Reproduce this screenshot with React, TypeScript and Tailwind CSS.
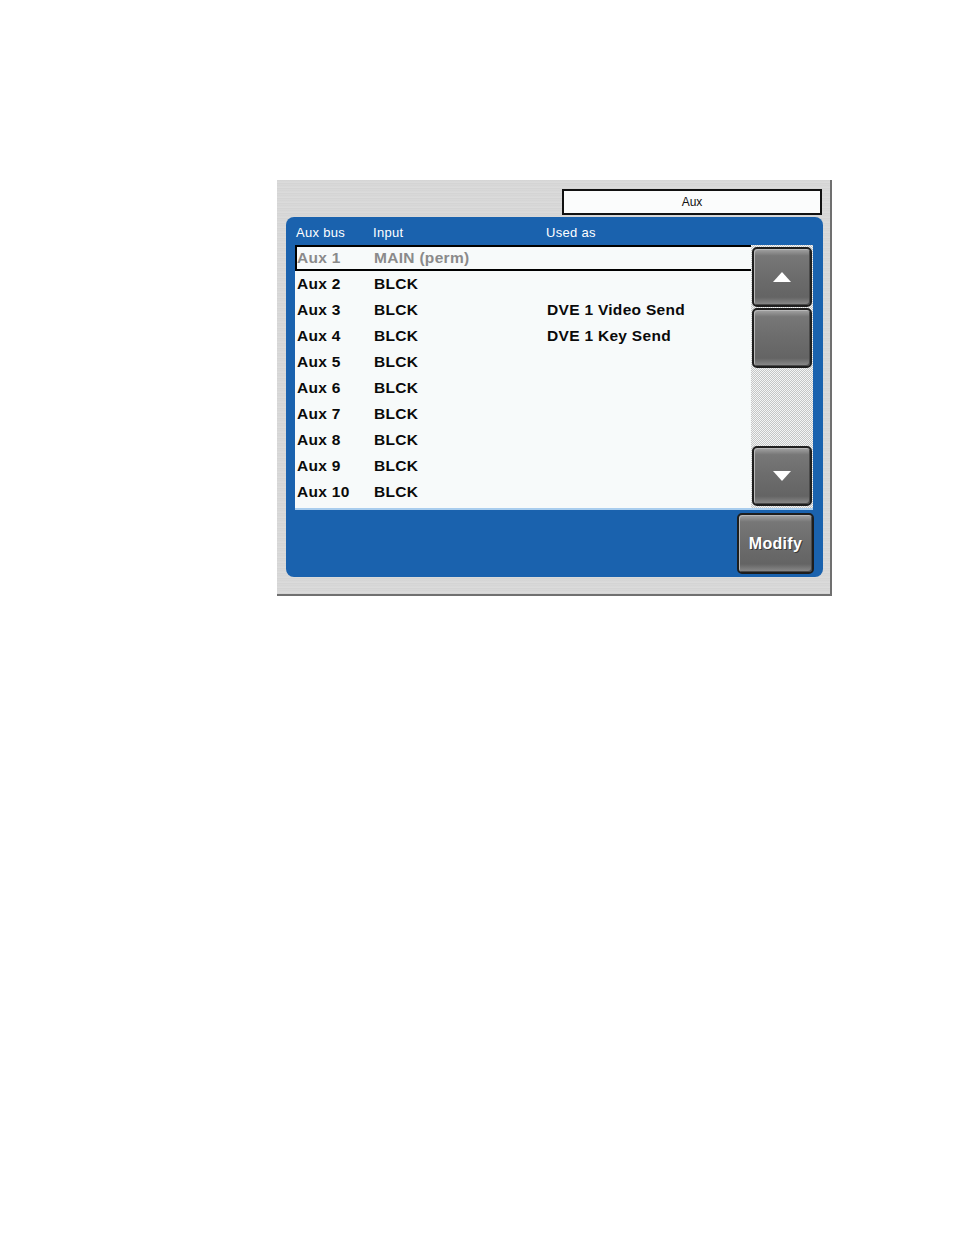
import React from 'react';

const rows = [
  { bus: 'Aux 1', input: 'MAIN (perm)', used: '' },
  { bus: 'Aux 2', input: 'BLCK', used: '' },
  { bus: 'Aux 3', input: 'BLCK', used: 'DVE 1 Video Send' },
  { bus: 'Aux 4', input: 'BLCK', used: 'DVE 1 Key Send' },
  { bus: 'Aux 5', input: 'BLCK', used: '' },
  { bus: 'Aux 6', input: 'BLCK', used: '' },
  { bus: 'Aux 7', input: 'BLCK', used: '' },
  { bus: 'Aux 8', input: 'BLCK', used: '' },
  { bus: 'Aux 9', input: 'BLCK', used: '' },
  { bus: 'Aux 10', input: 'BLCK', used: '' },
];

// grey hardware-style key used for scroll arrows and Modify
function Key({ className = '', children }: { className?: string; children?: React.ReactNode }) {
  return (
    <div
      className={
        'flex items-center justify-center rounded-[5px] border-2 border-[#1e1e1e] bg-[linear-gradient(180deg,#a4a4a4_0%,#777_12%,#6c6c6c_50%,#646464_86%,#8c8c8c_100%)] shadow-[inset_1px_1px_0_#b8b8b8,inset_-1px_-1px_0_#4a4a4a] ' +
        className
      }
    >
      {children}
    </div>
  );
}

export default function App() {
  return (
    <div className="min-h-[1235px] w-full bg-white pl-[277px] pt-[180px] font-['Liberation_Sans',Arial,sans-serif]">
      <div className="flex h-[416px] w-[555px] flex-col border-b-2 border-r-2 border-[#707070] bg-[#d8d8d8] bg-[image:repeating-linear-gradient(180deg,#dedede_0px,#cdcdcd_1px,#e4e4e4_2px,#d2d2d2_3px,#dadada_5px)] pl-[9px] pt-[9px]">
        {/* title box */}
        <div className="flex justify-end pr-[8px]">
          <div className="flex h-[26px] w-[260px] items-center justify-center border-2 border-[#111] bg-[#fbfcfc] text-[12px] text-[#111]">
            Aux
          </div>
        </div>

        {/* blue panel */}
        <div className="mt-[2px] flex h-[360px] w-[537px] flex-col rounded-[8px] bg-[#1a62ae] pl-[9px]">
          <div className="flex h-[28px] items-center pt-[4px] text-[13px] tracking-[0.3px] text-white">
            <div className="w-[78px] pl-[1px]">Aux bus</div>
            <div className="w-[173px]">Input</div>
            <div>Used as</div>
          </div>

          <div className="flex h-[265px] w-[518px] border-b-2 border-[#a9cdee] bg-[#f7fafa]">
            <div className="flex w-[456px] flex-col">
              {rows.map((r, i) => (
                <div
                  key={r.bus}
                  className={
                    'flex h-[26px] items-center text-[15.5px] font-bold tracking-[0.3px] ' +
                    (i === 0
                      ? 'w-[458px] border-2 border-black text-[#8a8a8a]'
                      : 'pl-[2px] text-[#0a0a0a]')
                  }
                >
                  <div className="w-[77px]">{r.bus}</div>
                  <div className="w-[173px]">{r.input}</div>
                  <div>{r.used}</div>
                </div>
              ))}
            </div>
            <div className="flex w-[62px] flex-col bg-[#e6e8e8] bg-[image:repeating-conic-gradient(#c4c6c6_0_25%,#f4f5f5_0_50%)] bg-[length:2px_2px] pl-[1px] pt-[2px]">
              <Key className="h-[60px] w-[60px]">
                <svg width="18" height="10" viewBox="0 0 18 10">
                  <polygon points="9,0 18,10 0,10" fill="#fff" />
                </svg>
              </Key>
              <Key className="mt-[1px] h-[60px] w-[60px]" />
              <div className="flex-1" />
              <Key className="mb-[2px] h-[60px] w-[60px]">
                <svg width="18" height="10" viewBox="0 0 18 10">
                  <polygon points="0,0 18,0 9,10" fill="#fff" />
                </svg>
              </Key>
            </div>
          </div>

          <div className="flex justify-end pr-[9px] pt-[3px]">
            <Key className="h-[61px] w-[77px]">
              <span className="text-[16px] font-bold tracking-[0.3px] text-white [text-shadow:1px_1px_0_#3a3a3a]">Modify</span>
            </Key>
          </div>
        </div>
      </div>
    </div>
  );
}
